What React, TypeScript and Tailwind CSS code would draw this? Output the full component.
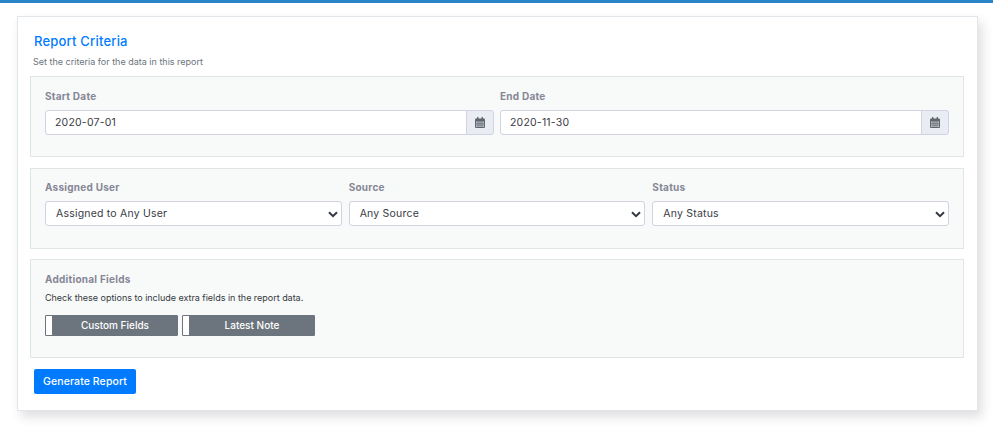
import React from "react";

function Cal() {
  return (
    <svg width="10" height="11" viewBox="0 0 10 11" fill="none">
      <rect x="0" y="1.500" width="10" height="9.500" rx="1" fill="#5f666d" />
      <rect x="2" y="0" width="1.400" height="3" fill="#5f666d" />
      <rect x="6.600" y="0" width="1.400" height="3" fill="#5f666d" />
      <path d="M1 4.500v5.500h8V4.500z" fill="#c9ccd2" />
      <path d="M3 4.500v5.500M5 4.500v5.500M7 4.500v5.500M1 6.300h8M1 8.100h8" stroke="#5f666d" strokeWidth="0.700" />
    </svg>
  );
}

function DateField({ label, value }: { label: string; value: string }) {
  return (
    <div className="flex-1 min-w-0">
      <div className="text-[10px] leading-[15px] font-bold tracking-[0.25px] text-[#858796] mb-[6px]">{label}</div>
      <div className="flex h-[25px]">
        <div className="flex-1 bg-white border border-[#d1d3e2] rounded-l-[3px] pl-[9px] text-[10.500px] leading-[23px] tracking-[0.2px] text-[#3a3b45]">{value}</div>
        <div className="w-[28px] -ml-px bg-[#eaecf4] border border-[#d1d3e2] rounded-r-[3px] flex items-center justify-center"><Cal /></div>
      </div>
    </div>
  );
}

function SelectField({ label, value }: { label: string; value: string }) {
  return (
    <div className="flex-1 min-w-0">
      <div className="text-[10px] leading-[15px] font-bold tracking-[0.25px] text-[#858796] mb-[6px]">{label}</div>
      <div className="h-[25px] bg-white border border-[#d1d3e2] rounded-[3px] pl-[10px] pr-[3px] pt-px flex items-center justify-between text-[10.500px] tracking-[0.2px] text-[#3a3b45]">
        <span>{value}</span>
        <svg width="10" height="7" viewBox="0 0 10 7" fill="none" stroke="#343a40" strokeWidth="2"><path d="M1 1.200l4 4 4-4" /></svg>
      </div>
    </div>
  );
}

function Toggle({ label }: { label: string }) {
  return (
    <div className="w-[133px] h-[21px] bg-[#6c757d] rounded-[1px] flex items-center text-white text-[10px] font-medium border border-[#6c757d]">
      <div className="w-[6px] h-full bg-white" />
      <div className="flex-1 text-center pl-px">{label}</div>
    </div>
  );
}

export default function App() {
  return (
    <div className="w-[993px] h-[434px] bg-white overflow-hidden font-['Inter','Liberation_Sans',sans-serif]">
      <div className="h-[3px] bg-[#2a85c8]" />
      <div className="mt-[13px] ml-[17px] w-[961px] h-[395px] bg-white border border-[#e1e6ea] shadow-[4px_6px_10px_rgba(58,59,69,0.16)] pl-[12px] pr-[13px] pt-[16px]">
        <div className="pl-[4px] text-[13px] leading-[17px] tracking-[0.2px] font-medium text-[#007bff]">Report Criteria</div>
        <div className="pl-[3px] mt-[6px] text-[9px] leading-[12px] text-[#6c757d]">Set the criteria for the data in this report</div>
        <div className="mt-[8px] h-[81px] bg-[#f8f9f9] border border-[#e0e5e6] px-[14px] pt-[12px] flex gap-[6px]">
          <DateField label="Start Date" value="2020-07-01" />
          <DateField label="End Date" value="2020-11-30" />
        </div>
        <div className="mt-[11px] h-[81px] bg-[#f8f9f9] border border-[#e0e5e6] px-[14px] pt-[11px] flex gap-[7px]">
          <SelectField label="Assigned User" value="Assigned to Any User" />
          <SelectField label="Source" value="Any Source" />
          <SelectField label="Status" value="Any Status" />
        </div>
        <div className="mt-[10px] h-[99px] bg-[#f8f9f9] border border-[#e0e5e6] px-[14px] pt-[12px]">
          <div className="text-[10px] leading-[15px] font-bold tracking-[0.25px] text-[#858796]">Additional Fields</div>
          <div className="mt-[4px] text-[9px] leading-[13px] tracking-[-0.02px] text-[#343a40]">Check these options to include extra fields in the report data.</div>
          <div className="mt-[11px] flex gap-[4px]">
            <Toggle label="Custom Fields" />
            <Toggle label="Latest Note" />
          </div>
        </div>
        <button className="mt-[11px] ml-[4px] w-[102px] h-[25px] bg-[#007bff] rounded-[2px] text-white text-[10.500px] tracking-[0.1px] font-medium">Generate Report</button>
      </div>
    </div>
  );
}
